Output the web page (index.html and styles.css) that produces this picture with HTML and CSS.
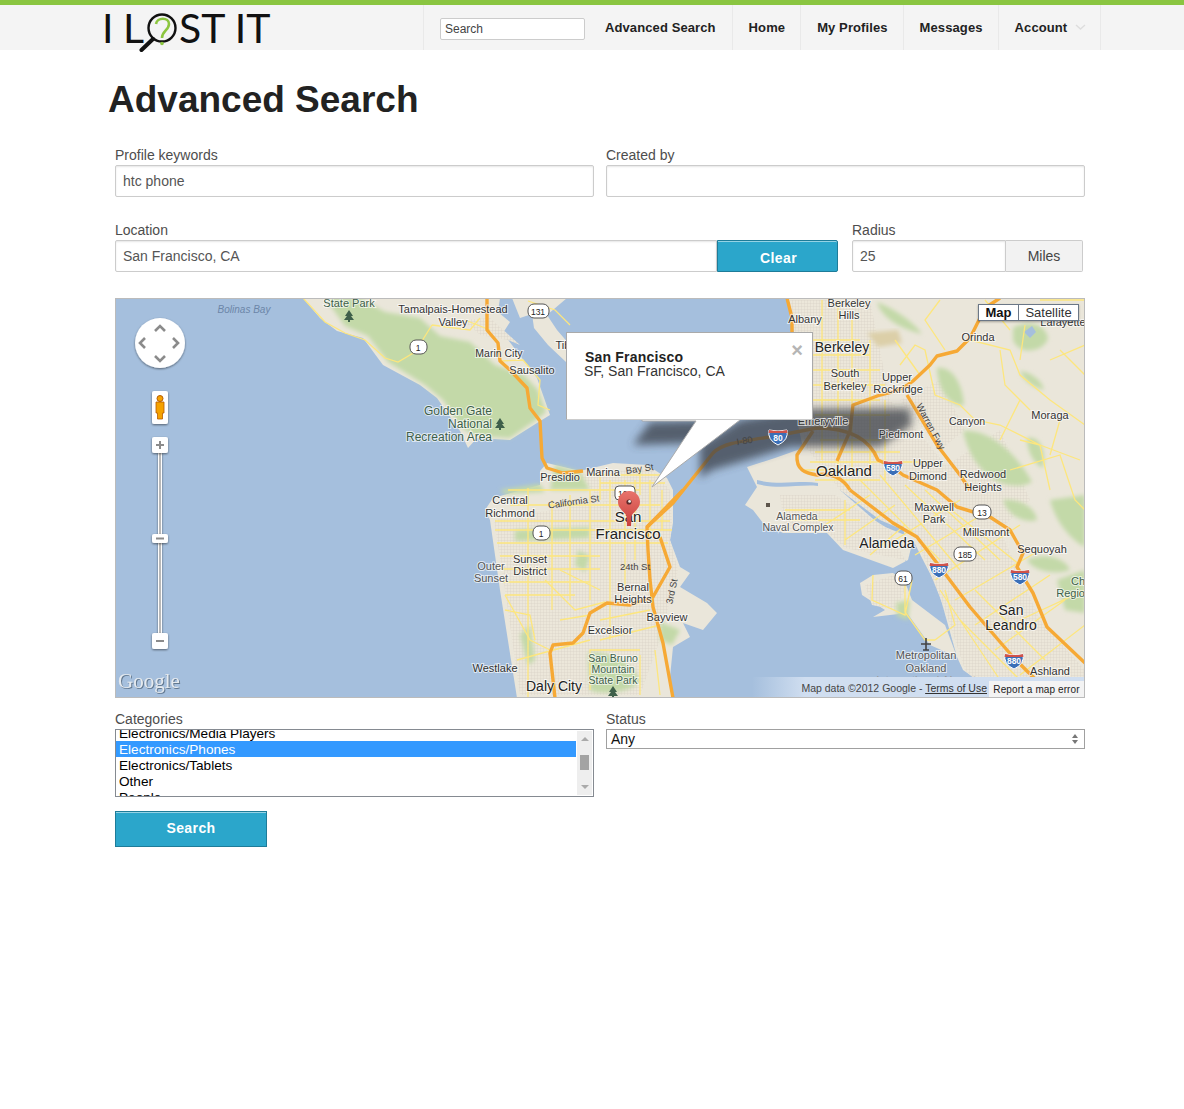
FILE: index.html
```html
<!DOCTYPE html>
<html lang="en">
<head>
<meta charset="UTF-8">
<meta name="viewport" content="width=device-width, initial-scale=1.0">
<title>Advanced Search - I Lost It</title>
<link rel="stylesheet" href="styles.css">
</head>
<body>
    <header class="site-header">
        <div class="header-inner">
            <a class="logo" href="#">
                <span class="logo-text logo-first">I L</span>
                <svg class="logo-lens" width="48" height="44" viewBox="0 0 48 44">
                    <circle cx="23" cy="19" r="13.5" fill="none" stroke="#111" stroke-width="2.4"/>
                    <path d="M14 30 L2.5 41" stroke="#111" stroke-width="4" stroke-linecap="round"/>
                    <path d="M17 15 C18 8 30 8 30 15 C30 21 23 22 23 29" fill="none" stroke="#8cc63f" stroke-width="2.6"/>
                    <circle cx="23" cy="34.5" r="1.8" fill="#8cc63f"/>
                </svg>
                <span class="logo-text logo-rest">ST IT</span>
            </a>
            <nav class="main-nav">
                <div class="nav-search"><input type="text" placeholder="Search"></div>
                <a class="nav-link nav-first" href="#">Advanced Search</a>
                <a class="nav-link" href="#">Home</a>
                <a class="nav-link" href="#">My Profiles</a>
                <a class="nav-link" href="#">Messages</a>
                <a class="nav-link nav-account" href="#">Account
                    <svg class="nav-caret" width="11" height="6" viewBox="0 0 11 6"><path d="M1 1 L5.5 5 L10 1" fill="none" stroke="#ddd" stroke-width="1.4"/></svg>
                </a>
            </nav>
        </div>
    </header>

    <main class="page">
        <h1>Advanced Search</h1>

        <form class="search-form">
            <div class="form-row two-col">
                <div>
                    <label>Profile keywords</label>
                    <input class="text-input" type="text" value="htc phone">
                </div>
                <div>
                    <label>Created by</label>
                    <input class="text-input" type="text">
                </div>
            </div>

            <div class="form-row location-row">
                <div class="location-col">
                    <label>Location</label>
                    <div class="input-group">
                        <input class="text-input" type="text" value="San Francisco, CA">
                        <button class="btn btn-clear" type="button">Clear</button>
                    </div>
                </div>
                <div class="radius-col">
                    <label>Radius</label>
                    <div class="input-group">
                        <input class="text-input" type="text" value="25">
                        <span class="postfix">Miles</span>
                    </div>
                </div>
            </div>

            <div class="map">
                <svg class="map-canvas" width="968" height="398" viewBox="116 299 968 398">
                    <defs>
                        <pattern id="streets" width="3" height="3" patternUnits="userSpaceOnUse">
                            <rect width="3" height="3" fill="#ece7da"/>
                            <path d="M0 0H3M0 0V3" stroke="#d6d1c4" stroke-width=".7"/>
                        </pattern>
                        <filter id="blur3" x="-20%" y="-40%" width="140%" height="180%"><feGaussianBlur stdDeviation="4"/></filter>
                        <filter id="blur1" x="-10%" y="-10%" width="120%" height="120%"><feGaussianBlur stdDeviation="2"/></filter>
                        <filter id="ctrlShadow" x="-30%" y="-30%" width="160%" height="160%"><feDropShadow dx="0" dy="1" stdDeviation="1.2" flood-color="#000" flood-opacity=".5"/></filter>
                        <linearGradient id="pinFill" x1="0" y1="0" x2="0" y2="1"><stop offset="0" stop-color="#e8736c"/><stop offset="1" stop-color="#c9403c"/></linearGradient>
                        <symbol id="shield" width="20" height="17" viewBox="0 0 20 17">
                            <path d="M1 1 Q10 3 19 1 Q21 11 10 16 Q-1 11 1 1Z" fill="#3a6fb8" stroke="#fff"/>
                            <path d="M1 1 Q10 3 19 1 L19.4 4 H.6Z" fill="#d0524a"/>
                        </symbol>
                    </defs>

                    <rect class="water" x="116" y="299" width="968" height="398"/>

                    <!-- land -->
                    <path class="land" d="M303 298 L320 318 L337 331 L363 338 L383 365 L420 385 L437 398 L460 431 L468 448 L477 438 L510 440 L537 423 L550 415 L543 395 L537 378 L525 362 L512 345 L503 333 L510 322 L498 312 L500 298 L512 298 L520 318 L532 314 L534 328 L548 345 L566 362 L570 345 L557 330 L547 315 L567 298Z"/>
                    <path class="land" d="M540 471 L547 463 L580 471 L613 463 L647 465 L667 478 L673 490 L673 523 L670 540 L680 567 L690 573 L680 587 L707 603 L717 613 L703 630 L683 623 L690 637 L673 647 L670 677 L673 698 L517 698 L500 590 L490 520 L485 510 L493 498 L540 485Z"/>
                    <path class="land" d="M787 298 L792 318 L795 340 L805 380 L806 410 L798 425 L803 448 L775 458 L747 467 L757 487 L745 505 L753 510 L763 523 L783 533 L827 533 L843 550 L893 568 L908 560 L913 540 L923 560 L937 587 L943 607 L957 657 L963 670 L977 680 L990 698 L1085 698 L1085 298Z"/>
                    <path class="land" d="M860 583 L873 575 L893 573 L905 582 L912 600 L945 625 L957 657 L930 645 L907 613 L873 617 L885 610 L862 595Z"/>
                    <path class="water" d="M757 480 C780 486 800 480 818 483 L818 486 C800 484 780 490 757 484Z"/>
                    <path class="water" d="M840 490 L880 525 L905 535 L900 520 L860 495Z"/>
                    <path class="water" d="M905 560 L925 575 L937 600 L925 590 L910 572Z"/>

                    <!-- street texture -->
                    <g class="urban">
                        <path d="M494 520 L670 490 L672 523 L670 540 L678 570 L660 640 L640 695 L520 695 L505 590Z"/>
                        <path d="M580 475 L650 468 L670 490 L600 500Z"/>
                        <path d="M790 300 L870 300 L890 400 L925 440 L1000 530 L1040 620 L1085 670 L1085 698 L995 698 L965 670 L945 610 L925 560 L915 535 L880 520 L840 490 L804 445 L806 400 L795 340Z"/>
                        <path d="M463 320 L490 318 L520 345 L508 340 L480 335Z"/>
                        <path d="M925 480 L1000 430 L1030 500 L1000 530Z"/>
                        <path d="M900 400 L940 380 L965 430 L940 450Z"/>
                        <path d="M780 495 L835 495 L890 530 L905 560 L845 548 L825 530 L785 530Z"/>
                        <path d="M865 585 L893 575 L905 590 L895 610 L872 605Z"/>
                    </g>

                    <!-- parks -->
                    <g class="park" filter="url(#blur1)">
                        <path d="M325 298 L345 326 L368 336 L388 362 L425 385 L443 400 L462 428 L476 436 L510 438 L536 420 L546 412 L538 390 L524 375 L495 365 L470 342 L440 336 L420 318 L385 312 L360 298Z"/>
                        <path d="M877 302 C892 308 912 320 922 334 C905 330 882 320 877 302Z"/>
                        <path d="M937 368 C950 366 962 380 964 405 C952 408 938 392 937 368Z"/>
                        <path d="M963 431 C985 428 1015 450 1032 482 C1015 492 975 484 963 431Z"/>
                        <path d="M1013 328 C1025 320 1045 322 1048 338 C1046 350 1020 358 1013 340Z"/>
                        <path d="M1020 371 C1030 372 1042 380 1044 390 C1035 388 1024 382 1020 371Z"/>
                        <path d="M1027 438 C1040 436 1046 450 1043 468 C1034 464 1027 452 1027 438Z"/>
                        <path d="M1003 500 C1015 498 1035 505 1037 520 C1025 524 1008 516 1003 500Z"/>
                        <path d="M1050 500 L1085 495 L1085 547 C1070 540 1055 520 1050 500Z"/>
                        <path d="M1027 560 C1045 552 1065 558 1070 570 C1055 575 1035 572 1027 560Z"/>
                        <path d="M1057 580 L1085 570 L1085 613 L1065 610Z"/>
                        <path d="M588 653 C605 650 630 660 640 680 C635 692 600 696 590 690Z"/>
                        <path d="M555 465 L580 472 L590 490 L550 490Z"/>
                        <path d="M500 490 L540 484 L545 492 L505 494Z"/>
                        <path d="M515 530 L590 527 L590 538 L515 541Z"/>
                        <path d="M578 550 L590 556 L585 572 L575 565Z"/>
                        <path d="M520 635 L530 625 L535 660 L528 665Z"/>
                        <path d="M896 603 L910 600 L908 620 L897 616Z"/>
                        <path d="M660 622 L680 630 L672 645 L660 640Z"/>
                    </g>
                    <path class="tan" d="M867 333 L898 330 L902 343 L878 347Z" filter="url(#blur1)"/>
                    <path class="water" d="M1024 332 L1032 326 L1036 332 L1030 338Z"/>

                    <!-- minor roads -->
                    <path class="road-minor" d="M495 521H670 M495 530H672 M497 543H668 M500 556H600 M502 569H600 M503 582H590 M505 595H575 M508 490H640 M510 505H660 M590 475H660 M600 483H665 M528 488V700 M552 500V610 M570 495V600 M590 490V600 M610 480V640 M625 480V590 M635 480V560 M650 480V540 M662 490V530 M600 470V500 M640 470V495"/>
                    <path class="road-minor" d="M505 595 L530 640 L550 650 M545 580 L575 610 L605 602 M600 620 L650 610 M517 660 L590 640 M590 690 L590 650 L640 650 M560 570 L600 590 M505 610 L530 615 L535 640 M560 620 L590 615 M600 640 L660 625 M655 650 L660 695 M640 655 L640 695"/>
                    <path class="road-minor" d="M790 340H860 M792 355H870 M797 370H880 M802 385H885 M806 400H880 M815 415H890 M820 440H880 M815 452H900 M810 462H930 M822 300V460 M838 300V470 M852 320V470 M870 340V470 M885 400V480 M805 470H860 M815 480H880"/>
                    <path class="road-minor" d="M860 480L940 560 M880 475L960 570 M905 485L985 560 M925 490L1000 560 M945 505L1020 565 M895 540L960 500 M915 555L990 510 M935 580L1020 525 M955 600L1040 550 M975 625L1050 575 M995 650L1065 600 M1020 675L1085 625 M1000 680L940 590 M1020 620L1085 590 M975 590L1045 660 M960 620L1020 680"/>
                    <path class="road-minor" d="M845 540L895 505 M825 525L870 495 M870 555L905 525 M785 510H850 M790 520H860 M845 500V545 M873 575L872 600L905 615L912 580 M905 575L905 612 L925 640 L935 640 M935 640 L955 625 L945 590"/>
                    <path class="road-minor" d="M900 365L915 345L925 350L935 395 L960 405 L975 420 L1000 425 L1040 445 L1080 460 M970 340L1010 350 L1020 375 L1050 400 L1085 425 M985 300L1010 330 M1040 300L1085 300 M1025 325 L1020 360 M1010 470L1060 455 L1075 500 L1085 510 M1020 440 L1040 445 L1050 490 M1000 350 L1005 385 L1030 410 M1060 350 L1085 375 M1050 360 L1085 345 M1000 440 L1020 400 M1060 420 L1050 455 M895 340 L920 375 M940 300 L925 320 L945 350"/>
                    <path class="road-minor" d="M303 298 L325 322 L345 333 L365 340 L385 358 L398 362 L415 352 L432 325 M432 325 L470 330 L480 318 M528 301 L555 310 L570 325 M500 361 L523 360 L540 380 L538 405 L550 410 M465 320 L490 330"/>

                    <!-- highways -->
                    <g class="road-major">
                        <path d="M487 298 V330 L498 343 L500 361 L510 370 L527 388 L530 408 L540 421 L542 458 L547 468 L563 473 L583 471"/>
                        <path d="M647 527 L673 503 L713 453 C722 444 735 442 770 437 L817 428 C850 428 870 440 878 460 L893 467 L903 475 L937 490 L957 507 L990 517 L1010 530 L1023 553 L1017 567 L1033 593 L1047 627 L1085 663"/>
                        <path d="M850 490 L893 523 L917 537 L940 567 L970 607 L1013 657 L1033 677 L1047 692"/>
                        <path d="M837 461 L850 431 L853 405 L880 395 M913 381 L930 365 L937 356 L957 351 L970 338 L980 318 M880 395 C895 392 905 388 913 381 M907 395 L937 445 L960 475 L970 490"/>
                        <path d="M813 431 L797 455 C796 470 805 473 817 475 C830 472 843 478 850 490"/>
                        <path d="M683 490 L647 527 L648 550 L650 580 L653 607 L663 643 L673 698 M660 537 L670 567 L653 597 L630 605 L607 603 L590 613 L583 633 L573 643 L553 645 L550 653 L555 698"/>
                        <path d="M787 298 L792 318 L792 335 M1000 298 L985 308"/>
                    </g>

                    <!-- popup shadow -->
                    <g class="popup-shadow" filter="url(#blur3)">
                        <path d="M633 445 L650 422 L705 420 L697 443Z"/>
                        <path d="M700 445 L740 420 L800 409 L910 408 L912 425 L880 447 L790 447 L740 462 L712 470 L700 478Z"/>
                    </g>

                    <!-- labels -->
                    <text class="lbl lbl-water" x="244" y="313">Bolinas Bay</text>
                    <text class="lbl lbl-park" x="349" y="307">State Park</text>
                    <text class="lbl" x="453" y="313">Tamalpais-Homestead</text>
                    <text class="lbl" x="453" y="326">Valley</text>
                    <text class="lbl lbl-sm" x="499" y="357">Marin City</text>
                    <text class="lbl" x="532" y="374">Sausalito</text>
                    <text class="lbl" x="563" y="349">Tib</text>
                    <text class="lbl lbl-park lbl-12" x="458" y="415">Golden Gate</text>
                    <text class="lbl lbl-park lbl-12" x="470" y="428">National</text>
                    <text class="lbl lbl-park lbl-12" x="449" y="441">Recreation Area</text>
                    <text class="lbl" x="560" y="481">Presidio</text>
                    <text class="lbl" x="603" y="476">Marina</text>
                    <text class="lbl lbl-road" transform="translate(640 472) rotate(-8)">Bay St</text>
                    <text class="lbl lbl-road" transform="translate(574 505) rotate(-8)">California St</text>
                    <text class="lbl" x="510" y="504">Central</text>
                    <text class="lbl" x="510" y="517">Richmond</text>
                    <text class="lbl lbl-big" x="628" y="522">San</text>
                    <text class="lbl lbl-big" x="628" y="539">Francisco</text>
                    <text class="lbl lbl-road" x="635" y="570">24th St</text>
                    <text class="lbl" x="530" y="563">Sunset</text>
                    <text class="lbl" x="530" y="575">District</text>
                    <text class="lbl lbl-dim" x="491" y="570">Outer</text>
                    <text class="lbl lbl-dim" x="491" y="582">Sunset</text>
                    <text class="lbl" x="633" y="591">Bernal</text>
                    <text class="lbl" x="633" y="603">Heights</text>
                    <text class="lbl lbl-road" transform="translate(675 592) rotate(-78)">3rd St</text>
                    <text class="lbl" x="667" y="621">Bayview</text>
                    <text class="lbl" x="610" y="634">Excelsior</text>
                    <text class="lbl lbl-park lbl-sm" x="613" y="662">San Bruno</text>
                    <text class="lbl lbl-park lbl-sm" x="613" y="673">Mountain</text>
                    <text class="lbl lbl-park lbl-sm" x="613" y="684">State Park</text>
                    <text class="lbl" x="495" y="672">Westlake</text>
                    <text class="lbl lbl-big lbl-14" x="554" y="691">Daly City</text>
                    <text class="lbl" x="849" y="307">Berkeley</text>
                    <text class="lbl" x="849" y="319">Hills</text>
                    <text class="lbl" x="805" y="323">Albany</text>
                    <text class="lbl lbl-big lbl-14" x="842" y="352">Berkeley</text>
                    <text class="lbl" x="845" y="377">South</text>
                    <text class="lbl" x="845" y="390">Berkeley</text>
                    <text class="lbl" x="897" y="381">Upper</text>
                    <text class="lbl" x="898" y="393">Rockridge</text>
                    <text class="lbl" x="978" y="341">Orinda</text>
                    <text class="lbl" x="1050" y="419">Moraga</text>
                    <text class="lbl" x="823" y="425">Emeryville</text>
                    <text class="lbl lbl-sm" x="901" y="438">Piedmont</text>
                    <text class="lbl lbl-sm" x="967" y="425">Canyon</text>
                    <text class="lbl lbl-road" transform="translate(928 428) rotate(62)">Warren Fwy</text>
                    <text class="lbl lbl-big" x="844" y="476">Oakland</text>
                    <text class="lbl" x="928" y="467">Upper</text>
                    <text class="lbl" x="928" y="480">Dimond</text>
                    <text class="lbl" x="983" y="478">Redwood</text>
                    <text class="lbl" x="983" y="491">Heights</text>
                    <text class="lbl" x="1063" y="326">Lafayette</text>
                    <text class="lbl lbl-dim lbl-sm" x="797" y="520">Alameda</text>
                    <text class="lbl lbl-dim lbl-sm" x="798" y="531">Naval Complex</text>
                    <text class="lbl" x="934" y="511">Maxwell</text>
                    <text class="lbl" x="934" y="523">Park</text>
                    <text class="lbl" x="986" y="536">Millsmont</text>
                    <text class="lbl lbl-big lbl-14" x="887" y="548">Alameda</text>
                    <text class="lbl" x="1042" y="553">Sequoyah</text>
                    <text class="lbl lbl-park lbl-end" x="1085" y="585">Ch</text>
                    <text class="lbl lbl-park lbl-end" x="1085" y="597">Regio</text>
                    <text class="lbl lbl-big lbl-14" x="1011" y="615">San</text>
                    <text class="lbl lbl-big lbl-14" x="1011" y="630">Leandro</text>
                    <text class="lbl lbl-dim" x="926" y="659">Metropolitan</text>
                    <text class="lbl lbl-dim" x="926" y="672">Oakland</text>
                    <text class="lbl lbl-faint" x="926" y="684">International Airport</text>
                    <text class="lbl" x="1050" y="675">Ashland</text>
                    <text class="lbl lbl-road" transform="translate(745 444) rotate(-8)">I-80</text>
                    <path class="tree" d="M349 310 L353 316 H351 L354 320 H350 V322 H348 V320 H344 L347 316 H345Z"/>
                    <path class="tree" d="M500 418 L504 424 H502 L505 428 H501 V430 H499 V428 H495 L498 424 H496Z"/>
                    <path class="tree" d="M613 686 L617 692 H615 L618 696 H614 V698 H612 V696 H608 L611 692 H609Z"/>
                    <rect x="766" y="503" width="4" height="4" fill="#5d554b"/>
                    <path d="M926 638 V650 M921 644 H931 M923 650 H929" stroke="#444" stroke-width="1.6"/>

                    <!-- highway shields -->
                    <use href="#shield" x="768" y="429"/><text class="shield-num" x="778" y="441">80</text>
                    <use href="#shield" x="883" y="460"/><text class="shield-num" x="893" y="471">580</text>
                    <use href="#shield" x="929" y="562"/><text class="shield-num" x="939" y="573">880</text>
                    <use href="#shield" x="1010" y="569"/><text class="shield-num" x="1020" y="580">580</text>
                    <use href="#shield" x="1004" y="653"/><text class="shield-num" x="1014" y="664">880</text>
                    <g class="route"><rect x="528" y="304" width="21" height="14" rx="6"/><text x="538" y="314.5">131</text></g>
                    <g class="route"><rect x="410" y="340" width="17" height="14" rx="6"/><text x="418" y="350.5">1</text></g>
                    <g class="route"><rect x="533" y="526" width="17" height="14" rx="6"/><text x="541" y="536.5">1</text></g>
                    <g class="route"><rect x="973" y="505" width="18" height="14" rx="6"/><text x="982" y="515.5">13</text></g>
                    <g class="route"><rect x="954" y="547" width="22" height="14" rx="6"/><text x="965" y="557.5">185</text></g>
                    <g class="route"><rect x="895" y="571" width="17" height="14" rx="6"/><text x="903" y="581.5">61</text></g>
                    <g class="route"><rect x="615" y="486" width="20" height="14" rx="4"/><text x="625" y="496.5">101</text></g>

                    <!-- popup tail -->
                    <path class="popup-tail" d="M642 418 V421 H696 L652 487 L740 420 V418Z"/>

                    <!-- marker -->
                    <path d="M629 491 C621.5 491 618 497 618 502 C618 509 625 512 626.5 516 L627 526 H631 L631.5 516 C633 512 640 509 640 502 C640 497 636.5 491 629 491Z" fill="url(#pinFill)"/>
                    <circle cx="629" cy="502" r="2.6" fill="#5c2b2a"/>
                    <circle cx="629.6" cy="501.4" r="1.4" fill="#eee"/>

                    <!-- pan control -->
                    <g filter="url(#ctrlShadow)"><circle cx="160" cy="343" r="25" fill="#fff"/></g>
                    <path class="ctrl-arrow" d="M155 331 L160 326 L165 331 M155 356 L160 361 L165 356 M145 338 L140 343 L145 348 M173 338 L178 343 L173 348"/>

                    <!-- pegman -->
                    <g filter="url(#ctrlShadow)"><rect x="152" y="391" width="16" height="33" rx="2" fill="#fff"/></g>
                    <circle cx="160" cy="398.5" r="3" fill="#f5a200" stroke="#b75c00"/>
                    <path d="M156 402 H164 V413 H162.5 V419 H157.5 V413 H156Z" fill="#f5a200" stroke="#b75c00" stroke-width=".8"/>

                    <!-- zoom slider -->
                    <rect x="158" y="452" width="4" height="182" fill="#fff" filter="url(#ctrlShadow)"/>
                    <rect x="159.4" y="452" width="1.2" height="182" fill="#8a8a8a"/>
                    <g filter="url(#ctrlShadow)">
                        <rect x="152" y="437" width="16" height="16" rx="2" fill="#fff"/>
                        <rect x="152" y="534" width="16" height="9" rx="2" fill="#fff"/>
                        <rect x="152" y="633" width="16" height="16" rx="2" fill="#fff"/>
                    </g>
                    <path class="ctrl-mark" d="M156 445 H164 M160 441 V449 M156 538.5 H164 M156 641 H164"/>

                    <text class="google-mark" x="118" y="688">Google</text>
                </svg>

                <div class="map-type">
                    <span class="map-type-btn map-type-on">Map</span>
                    <span class="map-type-btn">Satellite</span>
                </div>

                <div class="popup">
                    <span class="popup-close">&times;</span>
                    <strong>San Francisco</strong>
                    <span class="popup-addr">SF, San Francisco, CA</span>
                </div>

                <div class="map-credit">Map data &copy;2012 Google - <u>Terms of Use</u></div>
                <div class="map-report">Report a map error</div>
            </div>

            <div class="form-row two-col filter-row">
                <div>
                    <label>Categories</label>
                    <div class="listbox">
                        <div class="list-items">
                            <div class="list-item">Electronics/Media Players</div>
                            <div class="list-item list-selected">Electronics/Phones</div>
                            <div class="list-item">Electronics/Tablets</div>
                            <div class="list-item">Other</div>
                            <div class="list-item">People</div>
                        </div>
                        <div class="list-scroll">
                            <span class="scroll-up"></span>
                            <span class="scroll-thumb"></span>
                            <span class="scroll-down"></span>
                        </div>
                    </div>
                </div>
                <div>
                    <label>Status</label>
                    <div class="status-select">
                        <span>Any</span>
                        <span class="select-arrows"></span>
                    </div>
                </div>
            </div>

            <button class="btn btn-search" type="button">Search</button>
        </form>
    </main>
</body>
</html>
```

FILE: styles.css
```css
body {
    margin: 0;
    padding: 0;
    font-family: "Liberation Sans", Arial, sans-serif;
    background: #fff;
    color: #222;
    min-height: 1109px;
}

/* header */
.site-header {
    border-top: 5px solid #8ac541;
    background: #f4f4f4;
    height: 45px;
}
.header-inner {
    width: 1000px;
    margin-left: 100px;
    display: flex;
    height: 45px;
}
.logo {
    width: 321px;
    margin-left: 2px;
    flex: none;
    display: flex;
    align-items: flex-start;
    color: #111;
    text-decoration: none;
}
.logo-text {
    font-family: Lato, "Open Sans", sans-serif;
    font-weight: 400;
    font-size: 41px;
    line-height: 46px;
    letter-spacing: 1px;
    white-space: pre;
}
.logo-first {
    word-spacing: -3px;
}
.logo-lens {
    margin: 4px 0 0 -6px;
    flex: none;
}
.logo-rest {
    margin-left: -8px;
    letter-spacing: 0;
}
.main-nav {
    display: flex;
    align-items: stretch;
    border-left: 1px solid #e9e9e9;
}
.nav-search {
    width: 165px;
    padding-left: 16px;
    display: flex;
    align-items: center;
    box-sizing: border-box;
    margin-top: 3px;
}
.nav-search input {
    width: 145px;
    height: 22px;
    box-sizing: border-box;
    border: 1px solid #ccc;
    border-radius: 2px;
    padding: 0 4px;
    font-family: inherit;
    font-size: 12px;
    background: #fff;
}
.nav-search input::placeholder {
    color: #444;
}
.nav-link {
    display: flex;
    align-items: center;
    padding: 0 15px 1px 16px;
    font-size: 13px;
    font-weight: bold;
    letter-spacing: .1px;
    color: #222;
    text-decoration: none;
    border-right: 1px solid #e9e9e9;
    white-space: nowrap;
}
.nav-first {
    padding-right: 16px;
}
.nav-account {
    padding-right: 14px;
}
.nav-caret {
    margin-left: 8px;
}

/* page */
.page {
    width: 970px;
    margin-left: 115px;
}
h1 {
    margin: 29px 0 26px -7px;
    font-size: 37px;
    line-height: 42px;
    font-weight: bold;
    color: #222;
}
label {
    display: block;
    font-size: 14px;
    line-height: 16px;
    color: #4d4d4d;
    margin-bottom: 2px;
}
.form-row {
    margin-bottom: 25px;
}
.two-col {
    display: grid;
    grid-template-columns: 479px 479px;
    column-gap: 12px;
}
.location-row {
    display: flex;
    margin-bottom: 26px;
}
.location-col {
    width: 723px;
    margin-right: 14px;
}
.radius-col {
    width: 231px;
}
.text-input {
    display: block;
    width: 100%;
    height: 32px;
    box-sizing: border-box;
    border: 1px solid #ccc;
    border-radius: 2px;
    box-shadow: inset 0 1px 2px rgba(0, 0, 0, 0.1);
    padding: 0 7px;
    font-family: inherit;
    font-size: 14px;
    color: #555;
    background: #fff;
}
.input-group {
    display: flex;
}
.location-col .text-input {
    width: 602px;
    border-radius: 2px 0 0 2px;
}
.radius-col .text-input {
    width: 154px;
    border-radius: 2px 0 0 2px;
}
.postfix {
    width: 77px;
    height: 32px;
    box-sizing: border-box;
    border: 1px solid #ccc;
    border-left: 0;
    background: #f2f2f2;
    color: #444;
    font-size: 14px;
    line-height: 30px;
    text-align: center;
    border-radius: 0 2px 2px 0;
}
.btn {
    background: #2ba6cb;
    border: 1px solid #1e7c99;
    box-shadow: inset 0 1px 0 rgba(255, 255, 255, 0.5);
    color: #fff;
    font-family: inherit;
    font-size: 14px;
    font-weight: bold;
    letter-spacing: .4px;
    cursor: pointer;
}
.btn-clear {
    width: 121px;
    height: 32px;
    padding: 3px 0 0 2px;
    border-radius: 0 2px 2px 0;
}
.btn-search {
    width: 152px;
    height: 36px;
    display: block;
    padding: 0 0 2px;
}

/* map */
.map {
    position: relative;
    width: 970px;
    height: 400px;
    box-sizing: border-box;
    border: 1px solid #bbb;
    overflow: hidden;
    margin-bottom: 13px;
}
.map-canvas {
    display: block;
}
.water {
    fill: #a5bfdd;
}
.land {
    fill: #eae6da;
}
.park path {
    fill: #c3d9a8;
}
.tan {
    fill: #dccfa8;
}
.urban path {
    fill: url(#streets);
}
.road-minor {
    fill: none;
    stroke: #fde67d;
    stroke-width: 1.3;
}
.road-major path {
    fill: none;
    stroke: #f6a935;
    stroke-width: 3.4;
    stroke-linejoin: round;
}
.popup-shadow {
    fill: #3a3f48;
    opacity: .75;
}
.popup-tail {
    fill: #fff;
    stroke: #aaa;
}
.lbl {
    font-size: 11px;
    fill: #333;
    text-anchor: middle;
    stroke: rgba(255, 255, 255, 0.65);
    stroke-width: 2px;
    paint-order: stroke;
}
.lbl-sm {
    font-size: 10.5px;
}
.lbl-12 {
    font-size: 12px;
}
.lbl-big {
    font-size: 15px;
    fill: #222;
}
.lbl-14 {
    font-size: 14px;
}
.lbl-park {
    fill: #3e5f4a;
}
.lbl-water {
    fill: #6c86a8;
    font-style: italic;
    font-size: 10px;
    stroke: none;
}
.lbl-dim {
    fill: #555;
}
.lbl-faint {
    fill: #999;
    font-size: 11.5px;
    stroke: none;
}
.lbl-road {
    fill: #444;
    font-size: 9.5px;
    stroke: none;
}
.lbl-end {
    text-anchor: end;
}
.tree {
    fill: #3e5f4a;
}
.shield-num {
    font-size: 8.5px;
    font-weight: bold;
    fill: #fff;
    text-anchor: middle;
}
.route rect {
    fill: #fff;
    stroke: #555;
}
.route text {
    font-size: 8.5px;
    fill: #222;
    text-anchor: middle;
}
.ctrl-arrow {
    fill: none;
    stroke: #8b8b8b;
    stroke-width: 2.6;
}
.ctrl-mark {
    fill: none;
    stroke: #8b8b8b;
    stroke-width: 2;
}
.google-mark {
    font-family: "Liberation Serif", serif;
    font-size: 21px;
    fill: #e6eaee;
    filter: drop-shadow(1px 1px 0 rgba(70, 90, 110, 0.7));
}
.map-type {
    position: absolute;
    top: 5px;
    right: 5px;
    display: flex;
    background: #fff;
    border: 1px solid #6b7786;
    height: 15px;
    font-size: 13px;
    line-height: 15px;
    box-shadow: 0 1px 2px rgba(0, 0, 0, 0.3);
}
.map-type-btn {
    display: block;
    width: 59px;
    text-align: center;
    color: #333;
}
.map-type-on {
    width: 39px;
    font-weight: bold;
    color: #111;
    border-right: 1px solid #6b7786;
}
.popup {
    position: absolute;
    left: 450px;
    top: 33px;
    width: 247px;
    height: 88px;
    box-sizing: border-box;
    background: #fff;
    border: 1px solid #aaa;
    border-bottom-color: #ccc;
    padding: 17px 17px;
    font-size: 14px;
    line-height: 14px;
    color: #333;
}
.popup strong {
    display: block;
    color: #222;
    margin-left: 1px;
    letter-spacing: .2px;
}
.popup-addr {
    display: block;
}
.popup-close {
    position: absolute;
    right: 9px;
    top: 8px;
    font-size: 20px;
    line-height: 18px;
    color: #b5b5b5;
    font-weight: bold;
}
.map-credit {
    position: absolute;
    right: 0;
    bottom: 0;
    width: 332px;
    height: 20px;
    box-sizing: border-box;
    padding: 5px 97px 0 0;
    text-align: right;
    font-size: 10.5px;
    line-height: 12px;
    color: #444;
    white-space: nowrap;
    background: linear-gradient(90deg, rgba(208, 222, 240, 0), #d0def0 16%);
}
.map-credit u {
    color: #333;
}
.map-report {
    position: absolute;
    right: 0;
    bottom: 0;
    width: 95px;
    height: 16px;
    background: #f3f3f3;
    font-size: 10px;
    line-height: 17px;
    text-align: center;
    color: #222;
    letter-spacing: .1px;
}

/* filters */
.filter-row {
    margin-bottom: 14px;
}
.listbox {
    position: relative;
    height: 68px;
    box-sizing: border-box;
    border: 1px solid #858a91;
    overflow: hidden;
    background: #fff;
}
.list-items {
    margin-top: -5px;
    margin-right: 17px;
}
.list-item {
    height: 16px;
    line-height: 17px;
    padding-left: 3px;
    font-size: 13.6px;
    color: #000;
}
.list-selected {
    background: #3399ff;
    color: #fff;
}
.list-scroll {
    position: absolute;
    top: 1px;
    right: 1px;
    bottom: 1px;
    width: 15px;
    background: #eee;
}
.scroll-thumb {
    position: absolute;
    left: 3px;
    top: 24px;
    width: 9px;
    height: 15px;
    background: #a3a3a3;
}
.scroll-up,
.scroll-down {
    position: absolute;
    left: 4px;
    width: 0;
    height: 0;
    border-left: 4px solid transparent;
    border-right: 4px solid transparent;
}
.scroll-up {
    top: 6px;
    border-bottom: 4px solid #aaa;
}
.scroll-down {
    bottom: 6px;
    border-top: 4px solid #aaa;
}
.status-select {
    position: relative;
    height: 20px;
    box-sizing: border-box;
    border: 1px solid #a0a0a0;
    padding-left: 4px;
    font-size: 14px;
    line-height: 18px;
    color: #111;
    background: #fff;
}
.select-arrows::before,
.select-arrows::after {
    content: "";
    position: absolute;
    right: 6px;
    border-left: 3px solid transparent;
    border-right: 3px solid transparent;
}
.select-arrows::before {
    top: 4px;
    border-bottom: 4px solid #777;
}
.select-arrows::after {
    top: 10px;
    border-top: 4px solid #777;
}
```
